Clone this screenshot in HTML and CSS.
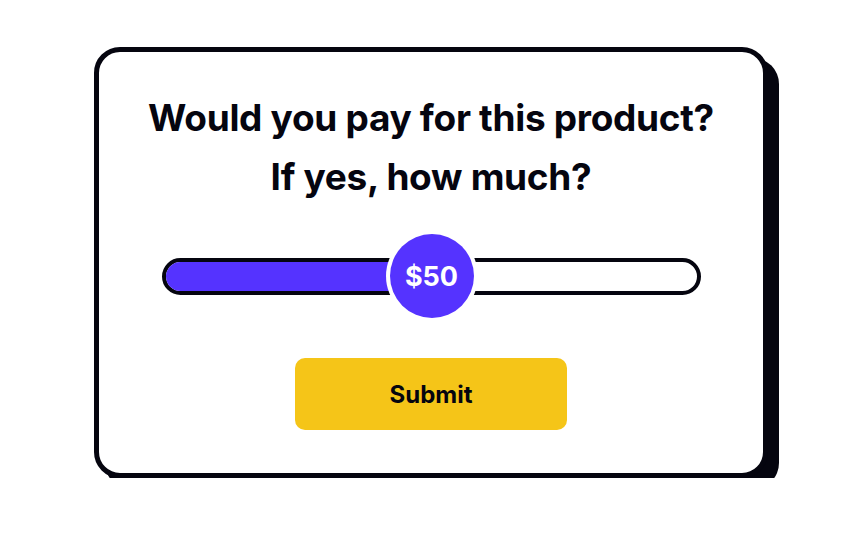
FILE: index.html
```html
<!DOCTYPE html>
<html>
<head>
<meta charset="utf-8">
<link rel="stylesheet" href="styles.css">
</head>
<body>
<div class="stage">
  <div class="card">
    <h1 class="title">Would you pay for this product?<br>If yes, how much?</h1>
    <div class="slider">
      <div class="track">
        <div class="fill" style="width: 50%"></div>
      </div>
      <div class="knob" style="left: 50%">$50</div>
    </div>
    <div class="actions">
      <button class="submit">Submit</button>
    </div>
  </div>
</div>
</body>
</html>
```
FILE: styles.css
```css
html, body {
  margin: 0;
  padding: 0;
  background: #ffffff;
}
body {
  font-family: Inter, "Noto Sans", sans-serif;
  color: #05050f;
}
.stage {
  padding: 47px 0 0 94px;
}
.card {
  width: 664px;
  height: 421px;
  border: 5px solid #05050f;
  border-radius: 26px;
  background: #fff;
  box-shadow: 11px 11px 0 0 #05050f;
  display: flex;
  flex-direction: column;
}
.title {
  margin: 36px 0 0 0;
  font-size: 37px;
  font-weight: 700;
  line-height: 59px;
  text-align: center;
  letter-spacing: -0.3px;
}
.slider {
  position: relative;
  margin: 28px 62px 0 63px;
  height: 84px;
  display: flex;
  align-items: center;
}
.track {
  flex: 1;
  height: 29px;
  border: 4px solid #05050f;
  border-radius: 20px;
  overflow: hidden;
  background: #fff;
}
.fill {
  height: 100%;
  background: #5533ff;
}
.knob {
  position: absolute;
  top: 0;
  width: 84px;
  height: 84px;
  margin-left: -42px;
  border-radius: 50%;
  background: #5533ff;
  box-shadow: 0 0 0 4px #fff;
  color: #fff;
  font-size: 27px;
  font-weight: 700;
  display: flex;
  align-items: center;
  justify-content: center;
}
.actions {
  display: flex;
  justify-content: center;
  margin-top: 40px;
}
.submit {
  width: 272px;
  height: 72px;
  border: none;
  border-radius: 10px;
  background: #f5c518;
  font-family: Inter, "Noto Sans", sans-serif;
  font-size: 24px;
  font-weight: 700;
  color: #05050f;
}
```
